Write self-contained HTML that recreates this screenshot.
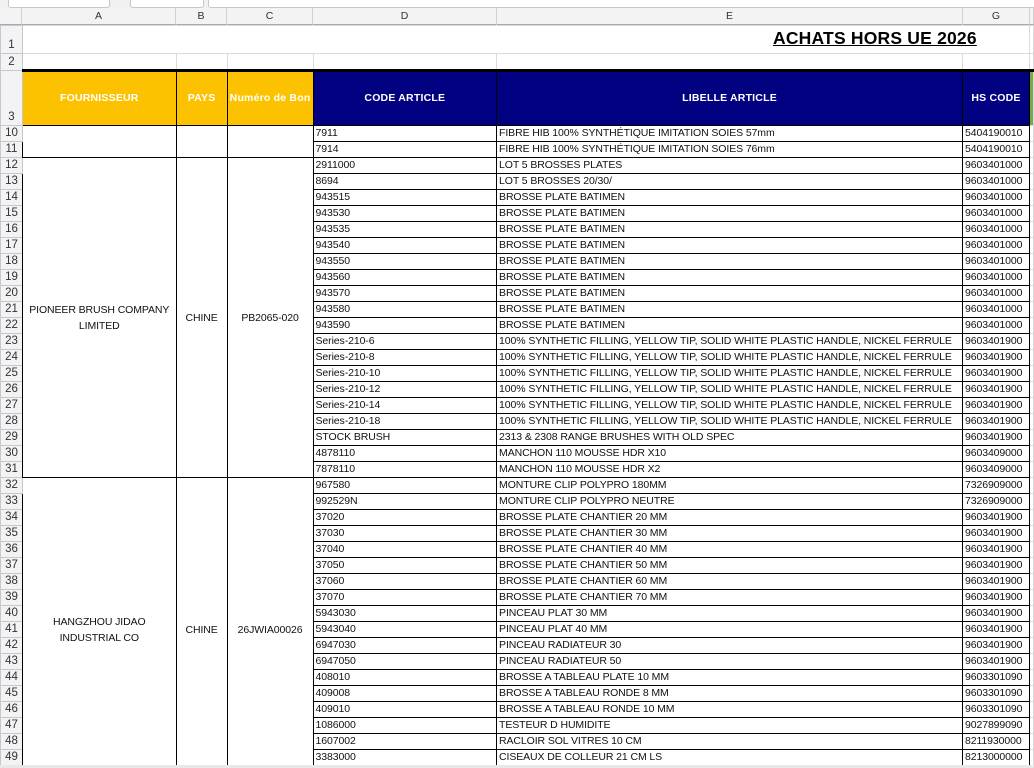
<!DOCTYPE html>
<html><head><meta charset="utf-8"><style>
html,body{margin:0;width:1034px;height:768px;overflow:hidden}
body{background:#fff;position:relative;font-family:"Liberation Sans",Arial,sans-serif}
.top{position:absolute;left:0;top:0;width:1034px;height:8px;background:#f0f0f0}
.top span{position:absolute;top:-4px;height:10px;border:1px solid #c8c8c8;border-radius:3px;background:#fff}
.ch{position:absolute;top:8px;height:17px;background:#f3f2f4;border-bottom:1px solid #aaa;font-size:10.5px;color:#333;text-align:center;line-height:17px;box-sizing:border-box;border-right:1px solid #d0d0d0}
table{position:absolute;left:0;top:25px;border-collapse:collapse;table-layout:fixed}
td{padding:0 0 0 2px;font-size:10.5px;letter-spacing:-0.1px;white-space:nowrap;overflow:hidden;border:1px solid #dadada;height:15px;line-height:15px;color:#111}
td.n{background:#f3f2f4;color:#333;text-align:center;padding:0;font-size:11.5px;border-color:#c8c8c8;vertical-align:bottom;letter-spacing:0}
td.d{border:1px solid #000}
td.m{border:1px solid #000;text-align:center;white-space:normal;line-height:16px;padding:0 4px}
td.h{color:#fff;font-weight:bold;text-align:center;border:1px solid #000;padding:0;font-size:10.5px;letter-spacing:0.2px}
.y{background:#fcc200}.b{background:#000080}
.title{position:absolute;left:773px;top:28px;font-size:17.5px;font-weight:bold;text-decoration:underline;letter-spacing:0.2px}
.bot{position:absolute;left:0;top:765px;width:1034px;height:20px;background:#e8e8e8;z-index:5}
</style></head><body>
<div class="top"><span style="left:8px;width:100px"></span><span style="left:130px;width:72px"></span><span style="left:208px;width:826px"></span></div>
<div class="ch" style="left:0;width:22px"></div>
<div class="ch" style="left:22px;width:154px">A</div>
<div class="ch" style="left:176px;width:51px">B</div>
<div class="ch" style="left:227px;width:86px">C</div>
<div class="ch" style="left:313px;width:184px">D</div>
<div class="ch" style="left:497px;width:466px">E</div>
<div class="ch" style="left:963px;width:67px">G</div>
<div class="ch" style="left:1030px;width:4px"></div>
<table>
<colgroup><col style="width:22px"><col style="width:154px"><col style="width:51px"><col style="width:86px"><col style="width:184px"><col style="width:466px"><col style="width:67px"><col style="width:4px"></colgroup>
<tr style="height:28px"><td class="n">1</td><td style="border-right-color:#fff"></td><td style="border-right-color:#fff"></td><td style="border-right-color:#fff"></td><td style="border-right-color:#fff"></td><td style="border-right-color:#fff"></td><td></td><td></td></tr>
<tr style="height:16px"><td class="n">2</td><td></td><td></td><td></td><td></td><td></td><td></td><td></td></tr>
<tr style="height:55px"><td class="n">3</td><td class="h y" style="border-top:3px solid #000">FOURNISSEUR</td><td class="h y" style="border-top:3px solid #000">PAYS</td><td class="h y" style="border-top:3px solid #000">Numéro de Bon</td><td class="h b" style="border-top:3px solid #000">CODE ARTICLE</td><td class="h b" style="border-top:3px solid #000">LIBELLE ARTICLE</td><td class="h b" style="border-top:3px solid #000">HS CODE</td><td style="background:#70ad47;border-top:3px solid #000"></td></tr>
<tr><td class="n">10</td><td class="m" rowspan="2"></td><td class="m" rowspan="2"></td><td class="m" rowspan="2"></td><td class="d">7911</td><td class="d">FIBRE HIB 100% SYNTHÉTIQUE IMITATION SOIES 57mm</td><td class="d">5404190010</td><td></td></tr>
<tr><td class="n">11</td><td class="d">7914</td><td class="d">FIBRE HIB 100% SYNTHÉTIQUE IMITATION SOIES 76mm</td><td class="d">5404190010</td><td></td></tr>
<tr><td class="n">12</td><td class="m" rowspan="20">PIONEER BRUSH COMPANY LIMITED</td><td class="m" rowspan="20">CHINE</td><td class="m" rowspan="20">PB2065-020</td><td class="d">2911000</td><td class="d">LOT 5 BROSSES PLATES</td><td class="d">9603401000</td><td></td></tr>
<tr><td class="n">13</td><td class="d">8694</td><td class="d">LOT 5 BROSSES 20/30/</td><td class="d">9603401000</td><td></td></tr>
<tr><td class="n">14</td><td class="d">943515</td><td class="d">BROSSE PLATE BATIMEN</td><td class="d">9603401000</td><td></td></tr>
<tr><td class="n">15</td><td class="d">943530</td><td class="d">BROSSE PLATE BATIMEN</td><td class="d">9603401000</td><td></td></tr>
<tr><td class="n">16</td><td class="d">943535</td><td class="d">BROSSE PLATE BATIMEN</td><td class="d">9603401000</td><td></td></tr>
<tr><td class="n">17</td><td class="d">943540</td><td class="d">BROSSE PLATE BATIMEN</td><td class="d">9603401000</td><td></td></tr>
<tr><td class="n">18</td><td class="d">943550</td><td class="d">BROSSE PLATE BATIMEN</td><td class="d">9603401000</td><td></td></tr>
<tr><td class="n">19</td><td class="d">943560</td><td class="d">BROSSE PLATE BATIMEN</td><td class="d">9603401000</td><td></td></tr>
<tr><td class="n">20</td><td class="d">943570</td><td class="d">BROSSE PLATE BATIMEN</td><td class="d">9603401000</td><td></td></tr>
<tr><td class="n">21</td><td class="d">943580</td><td class="d">BROSSE PLATE BATIMEN</td><td class="d">9603401000</td><td></td></tr>
<tr><td class="n">22</td><td class="d">943590</td><td class="d">BROSSE PLATE BATIMEN</td><td class="d">9603401000</td><td></td></tr>
<tr><td class="n">23</td><td class="d">Series-210-6</td><td class="d">100% SYNTHETIC FILLING, YELLOW TIP, SOLID WHITE PLASTIC HANDLE, NICKEL FERRULE</td><td class="d">9603401900</td><td></td></tr>
<tr><td class="n">24</td><td class="d">Series-210-8</td><td class="d">100% SYNTHETIC FILLING, YELLOW TIP, SOLID WHITE PLASTIC HANDLE, NICKEL FERRULE</td><td class="d">9603401900</td><td></td></tr>
<tr><td class="n">25</td><td class="d">Series-210-10</td><td class="d">100% SYNTHETIC FILLING, YELLOW TIP, SOLID WHITE PLASTIC HANDLE, NICKEL FERRULE</td><td class="d">9603401900</td><td></td></tr>
<tr><td class="n">26</td><td class="d">Series-210-12</td><td class="d">100% SYNTHETIC FILLING, YELLOW TIP, SOLID WHITE PLASTIC HANDLE, NICKEL FERRULE</td><td class="d">9603401900</td><td></td></tr>
<tr><td class="n">27</td><td class="d">Series-210-14</td><td class="d">100% SYNTHETIC FILLING, YELLOW TIP, SOLID WHITE PLASTIC HANDLE, NICKEL FERRULE</td><td class="d">9603401900</td><td></td></tr>
<tr><td class="n">28</td><td class="d">Series-210-18</td><td class="d">100% SYNTHETIC FILLING, YELLOW TIP, SOLID WHITE PLASTIC HANDLE, NICKEL FERRULE</td><td class="d">9603401900</td><td></td></tr>
<tr><td class="n">29</td><td class="d">STOCK BRUSH</td><td class="d">2313 &amp; 2308 RANGE BRUSHES WITH OLD SPEC</td><td class="d">9603401900</td><td></td></tr>
<tr><td class="n">30</td><td class="d">4878110</td><td class="d">MANCHON 110 MOUSSE HDR X10</td><td class="d">9603409000</td><td></td></tr>
<tr><td class="n">31</td><td class="d">7878110</td><td class="d">MANCHON 110 MOUSSE HDR X2</td><td class="d">9603409000</td><td></td></tr>
<tr><td class="n">32</td><td class="m" rowspan="19">HANGZHOU JIDAO INDUSTRIAL CO</td><td class="m" rowspan="19">CHINE</td><td class="m" rowspan="19">26JWIA00026</td><td class="d">967580</td><td class="d">MONTURE CLIP POLYPRO 180MM</td><td class="d">7326909000</td><td></td></tr>
<tr><td class="n">33</td><td class="d">992529N</td><td class="d">MONTURE CLIP POLYPRO NEUTRE</td><td class="d">7326909000</td><td></td></tr>
<tr><td class="n">34</td><td class="d">37020</td><td class="d">BROSSE PLATE CHANTIER 20 MM</td><td class="d">9603401900</td><td></td></tr>
<tr><td class="n">35</td><td class="d">37030</td><td class="d">BROSSE PLATE CHANTIER 30 MM</td><td class="d">9603401900</td><td></td></tr>
<tr><td class="n">36</td><td class="d">37040</td><td class="d">BROSSE PLATE CHANTIER 40 MM</td><td class="d">9603401900</td><td></td></tr>
<tr><td class="n">37</td><td class="d">37050</td><td class="d">BROSSE PLATE CHANTIER 50 MM</td><td class="d">9603401900</td><td></td></tr>
<tr><td class="n">38</td><td class="d">37060</td><td class="d">BROSSE PLATE CHANTIER 60 MM</td><td class="d">9603401900</td><td></td></tr>
<tr><td class="n">39</td><td class="d">37070</td><td class="d">BROSSE PLATE CHANTIER 70 MM</td><td class="d">9603401900</td><td></td></tr>
<tr><td class="n">40</td><td class="d">5943030</td><td class="d">PINCEAU PLAT 30 MM</td><td class="d">9603401900</td><td></td></tr>
<tr><td class="n">41</td><td class="d">5943040</td><td class="d">PINCEAU PLAT 40 MM</td><td class="d">9603401900</td><td></td></tr>
<tr><td class="n">42</td><td class="d">6947030</td><td class="d">PINCEAU RADIATEUR 30</td><td class="d">9603401900</td><td></td></tr>
<tr><td class="n">43</td><td class="d">6947050</td><td class="d">PINCEAU RADIATEUR 50</td><td class="d">9603401900</td><td></td></tr>
<tr><td class="n">44</td><td class="d">408010</td><td class="d">BROSSE A TABLEAU PLATE 10 MM</td><td class="d">9603301090</td><td></td></tr>
<tr><td class="n">45</td><td class="d">409008</td><td class="d">BROSSE A TABLEAU RONDE 8 MM</td><td class="d">9603301090</td><td></td></tr>
<tr><td class="n">46</td><td class="d">409010</td><td class="d">BROSSE A TABLEAU RONDE 10 MM</td><td class="d">9603301090</td><td></td></tr>
<tr><td class="n">47</td><td class="d">1086000</td><td class="d">TESTEUR D HUMIDITE</td><td class="d">9027899090</td><td></td></tr>
<tr><td class="n">48</td><td class="d">1607002</td><td class="d">RACLOIR SOL VITRES 10 CM</td><td class="d">8211930000</td><td></td></tr>
<tr><td class="n">49</td><td class="d">3383000</td><td class="d">CISEAUX DE COLLEUR 21 CM LS</td><td class="d">8213000000</td><td></td></tr>
<tr><td class="n">50</td><td class="d"></td><td class="d"></td><td class="d"></td><td></td></tr>
</table>
<div class="title">ACHATS HORS UE 2026</div>
<div class="bot"></div>
</body></html>
